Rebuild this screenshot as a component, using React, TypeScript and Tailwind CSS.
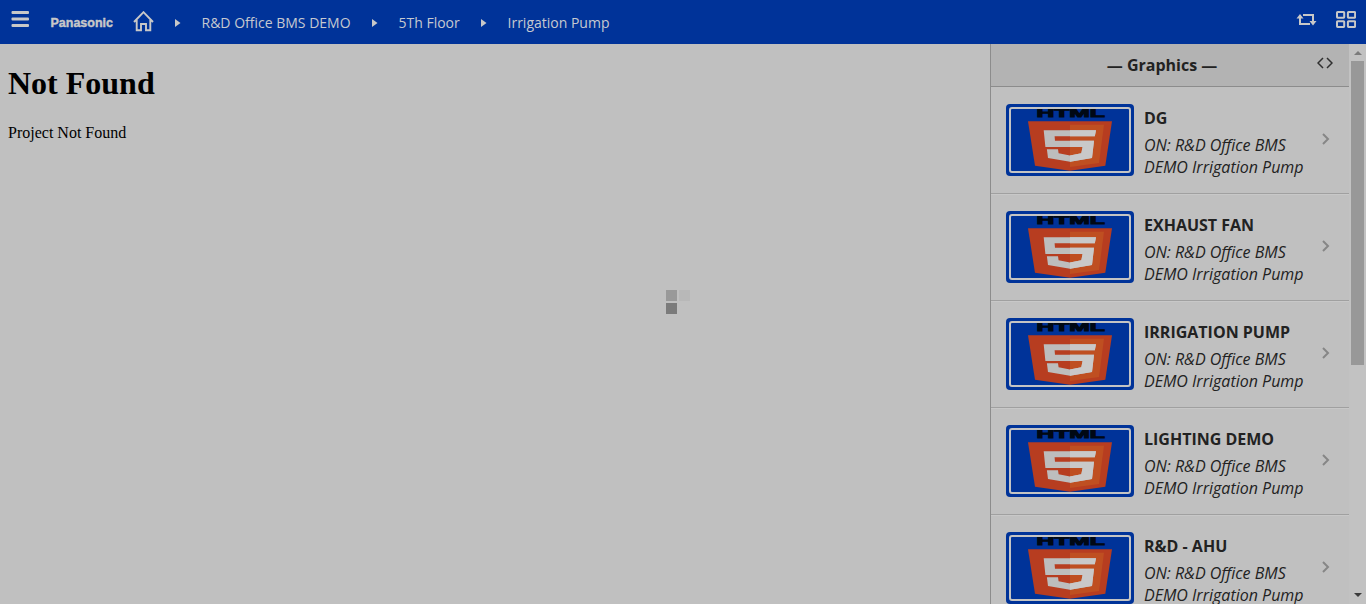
import React from "react";

const crumbs = ["R&D Office BMS DEMO", "5Th Floor", "Irrigation Pump"];
const graphics = ["DG", "EXHAUST FAN", "IRRIGATION PUMP", "LIGHTING DEMO", "R&D - AHU"];

function Thumbnail() {
  return (
    <svg width="128" height="72" viewBox="0 0 128 72" className="block shrink-0">
      <rect width="128" height="72" rx="4" fill="#003399" />
      <clipPath id="frame">
        <rect x="5" y="5" width="118" height="62" />
      </clipPath>
      <g clipPath="url(#frame)">
        <text
          transform="translate(30.5 12.8) scale(1.95 1)"
          fontFamily="'Liberation Sans', sans-serif"
          fontWeight="700"
          fontSize="11.8"
          textLength="35"
          lengthAdjust="spacingAndGlyphs"
          fill="#000814"
          stroke="#000814"
          strokeWidth="0.9"
        >
          HTML
        </text>
        <path d="M22 17.3H106L99.3 61.7L64 66.8L29 61.7Z" fill="#b73d20" />
        <path d="M64 20.7H98L93 59L64 63Z" fill="#bf4f21" />
        <path
          d="M37.7 26.3H90L88.8 32.2H48.6L49 36.8H88L86 53.9L64 57.7L42 53.9L40.9 45.2H52L52.6 49.3L64 51.5L75.3 49.3L76.6 42.9H39.4Z"
          fill="#bdbdbd"
        />
        <path d="M64 26.3H90L88.8 32.2H64ZM64 36.8H88L86 53.9L64 57.7V51.5L75.3 49.3L76.6 42.9H64Z" fill="#c9c9c9" />
      </g>
      <rect x="4" y="4" width="120" height="64" rx="2" fill="none" stroke="#c4c4c4" strokeWidth="2" />
    </svg>
  );
}

function Caret() {
  return (
    <svg width="6" height="8" viewBox="0 0 6 8" className="shrink-0" fill="#c8c8c8">
      <path d="M0 0L5.5 4L0 8Z" />
    </svg>
  );
}

function Header() {
  return (
    <header className="flex h-11 shrink-0 items-start bg-[#003399] text-[#c6c9d0]">
      <svg width="18" height="17" viewBox="0 0 18 17" className="mt-[11px] ml-[11px]" fill="#c8c8c8">
        <rect x="0.5" width="17.5" height="3" rx="1" />
        <rect x="0.5" y="6.5" width="17.5" height="3" rx="1" />
        <rect x="0.5" y="13" width="17.5" height="3" rx="1" />
      </svg>
      <svg width="64" height="16" viewBox="0 0 64 16" className="mt-[14px] ml-[21px]">
        <text
          x="0.5"
          y="13"
          fontFamily="'Liberation Sans', sans-serif"
          fontWeight="700"
          fontSize="12.3"
          textLength="62.5"
          lengthAdjust="spacingAndGlyphs"
          fill="#c8c8c8"
          stroke="#c8c8c8"
          strokeWidth="0.4"
        >
          Panasonic
        </text>
      </svg>
      <svg width="22" height="21" viewBox="0 0 22 21" className="mt-[11px] ml-[19px]" fill="none" stroke="#c8c8c8" strokeWidth="1.9">
        <path d="M1 11L10.5 1.2L20 11M3.7 9V19.3H8V13H13V19.3H17.3V9" />
      </svg>
      <nav className="flex h-11 items-center pt-px font-['Open_Sans',sans-serif] text-[14px] leading-5">
        <div className="ml-5 flex w-[26.5px] shrink-0"><Caret /></div>
        <span className="w-[170.5px] whitespace-nowrap">{crumbs[0]}</span>
        <div className="flex w-[26.5px] shrink-0"><Caret /></div>
        <span className="w-[82.5px] whitespace-nowrap">{crumbs[1]}</span>
        <div className="flex w-[26.5px] shrink-0"><Caret /></div>
        <span className="whitespace-nowrap">{crumbs[2]}</span>
      </nav>
      <svg width="21" height="14" viewBox="0 0 21 14" className="mt-[13px] mr-[19px] ml-auto" fill="none" stroke="#c8c8c8" strokeWidth="2">
        <path d="M4 3V11H14M7 2H17V10" />
        <path d="M0.5 5.5L4 1L7.5 5.5ZM13.5 8L17 12.5L20.5 8Z" fill="#c8c8c8" stroke="none" />
      </svg>
      <svg width="20" height="17" viewBox="0 0 20 17" className="mt-[10.5px] mr-[10px]" fill="none" stroke="#c8c8c8" strokeWidth="2">
        <rect x="1" y="1" width="7.2" height="5.7" rx="0.6" />
        <rect x="11.9" y="1" width="7.2" height="5.7" rx="0.6" />
        <rect x="1" y="10.2" width="7.2" height="5.7" rx="0.6" />
        <rect x="11.9" y="10.2" width="7.2" height="5.7" rx="0.6" />
      </svg>
    </header>
  );
}

export default function App() {
  return (
    <div className="flex h-[604px] w-[1366px] flex-col overflow-hidden bg-[#c0c0c0]">
      <Header />
      <div className="flex min-h-0 flex-1">
        <main className="w-[990px] shrink-0 px-2 pt-[21px] font-['Liberation_Serif',serif] text-black">
          <h1 className="text-[32px] leading-[37px] font-bold">Not Found</h1>
          <p className="mt-[22px] text-base leading-[18px]">Project Not Found</p>
          <svg width="26" height="26" viewBox="0 0 26 26" className="mt-[147px] ml-[657px]">
            <rect x="1" y="1" width="11" height="11" fill="#999" />
            <rect x="14" y="1" width="11" height="11" fill="#b8b8b8" />
            <rect x="1" y="14" width="11" height="11" fill="#7b7b7b" />
          </svg>
        </main>
        <aside className="flex w-[359px] shrink-0 flex-col border-l border-[#8c8c8c] font-['Open_Sans',sans-serif] text-[#222]">
          <div className="flex h-[43px] shrink-0 items-center border-b border-[#8c8c8c] bg-[#b3b3b3]">
            <h2 className="ml-4 flex-1 text-center text-base leading-5 font-bold">— Graphics —</h2>
            <svg width="16" height="12" viewBox="0 0 16 12" className="mr-4 -mt-1 shrink-0" fill="none" stroke="#303030" strokeWidth="1.5">
              <path d="M6 1L1 6L6 11M10 1L15 6L10 11" />
            </svg>
          </div>
          <ul className="min-h-0 flex-1 overflow-hidden">
            {graphics.map((name) => (
              <li key={name} className="flex h-[107px] items-start border-t border-b border-t-[#c8c8c8] border-b-[#a0a0a0] pt-4 pl-[15px] first:border-t-[#c0c0c0]">
                <Thumbnail />
                <div className="ml-[10px] w-[164px] whitespace-nowrap">
                  <div className="pt-1 text-base leading-[21px] font-bold">{name}</div>
                  <div className="mt-[5px] text-base leading-[22px] italic">
                    ON: R&amp;D Office BMS
                    <br />
                    DEMO Irrigation Pump
                  </div>
                </div>
                <svg width="8" height="12" viewBox="0 0 8 12" className="mt-[29px] ml-[14px]" fill="none" stroke="#868686" strokeWidth="2">
                  <path d="M1 1L6 6L1 11" />
                </svg>
              </li>
            ))}
          </ul>
        </aside>
        <div className="flex w-[17px] shrink-0 flex-col items-center bg-[#c2c2c2]">
          <svg width="8" height="4" viewBox="0 0 8 4" className="mt-[7px] shrink-0" fill="#7b7b7b">
            <path d="M4 0L8 4H0Z" />
          </svg>
          <div className="mt-[6px] h-[304px] w-[13px] shrink-0 bg-[#989898]" />
          <svg width="8" height="4" viewBox="0 0 8 4" className="mt-auto mb-[7px] shrink-0" fill="#3b3b3b">
            <path d="M0 0H8L4 4Z" />
          </svg>
        </div>
      </div>
    </div>
  );
}
